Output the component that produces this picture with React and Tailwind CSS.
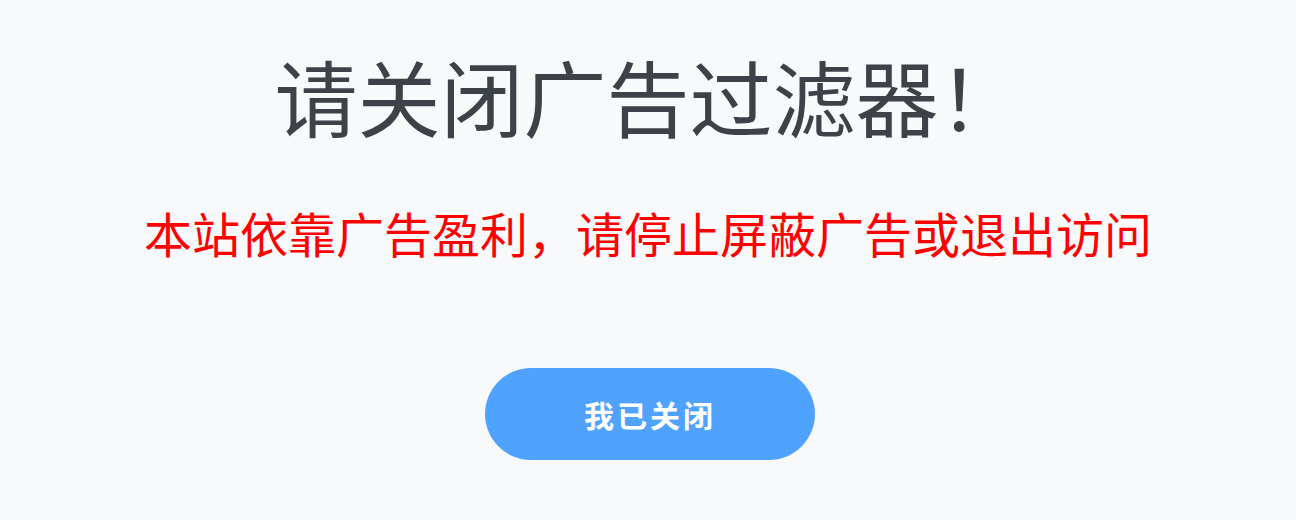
import React from 'react';

export default function App() {
  return (
    <div
      className="w-full h-[520px] bg-[#f8f9fb] flex flex-col items-center pt-[54px]"
      style={{ fontFamily: '"Noto Sans CJK SC", "Noto Sans", sans-serif' }}
    >
      <h1 className="text-[83px] leading-none text-[#3d4148] font-normal">请关闭广告过滤器！</h1>
      <p className="mt-[71px] text-[48px] leading-none text-[#ff0000] font-normal">
        本站依靠广告盈利，请停止屏蔽广告或退出访问
      </p>
      <button className="mt-[112px] ml-[4px] w-[330px] h-[92px] rounded-full bg-[#4fa3ff] text-white text-[30px] font-bold tracking-[3px]">
        我已关闭
      </button>
    </div>
  );
}
